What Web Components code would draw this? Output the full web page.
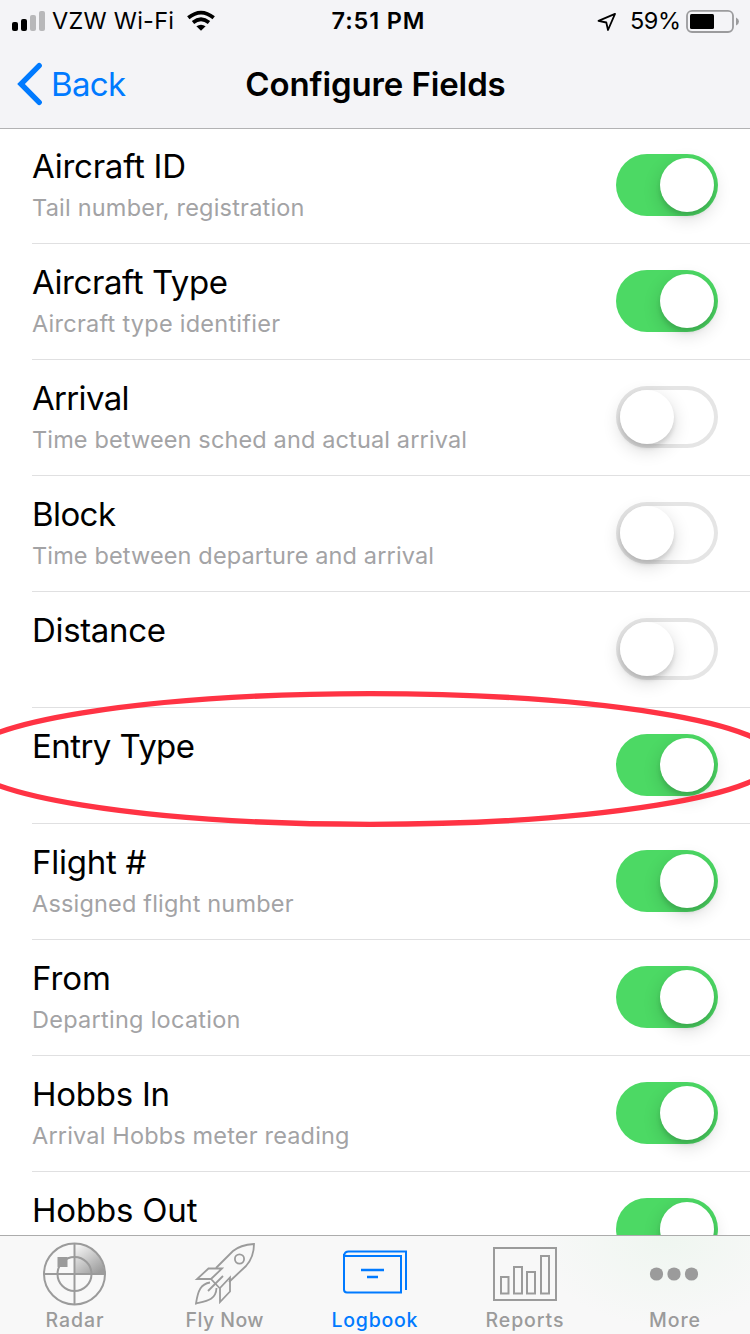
<!DOCTYPE html>
<html lang="en">
<head>
<meta charset="utf-8">
<title>Configure Fields</title>
<style>
    body {
        margin: 0;
        width: 750px;
        height: 1334px;
        overflow: hidden;
        background: #fff;
        color: #000;
        font-family: Inter, "Liberation Sans", sans-serif;
    }
</style>
</head>
<body>
<app-screen>
    <status-bar slot="top"></status-bar>
    <nav-bar slot="top" back="Back" heading="Configure Fields"></nav-bar>

    <field-row label="Aircraft ID" label-width="154" note="Tail number, registration" note-width="272.5" on></field-row>
    <field-row label="Aircraft Type" label-width="196" note="Aircraft type identifier" note-width="248" on></field-row>
    <field-row label="Arrival" label-width="97.5" note="Time between sched and actual arrival" note-width="435"></field-row>
    <field-row label="Block" label-width="84" note="Time between departure and arrival" note-width="402"></field-row>
    <field-row label="Distance" label-width="134"></field-row>
    <field-row label="Entry Type" label-width="163" on></field-row>
    <field-row label="Flight #" label-width="114.5" note="Assigned flight number" note-width="261.5" on></field-row>
    <field-row label="From" label-width="79" note="Departing location" note-width="208.5" on></field-row>
    <field-row label="Hobbs In" label-width="138" note="Arrival Hobbs meter reading" note-width="317.5" on></field-row>
    <field-row label="Hobbs Out" label-width="165.5" on></field-row>

    <highlight-ring slot="overlay"></highlight-ring>

    <tab-item slot="tabs" label="Radar" label-width="58">
        <svg width="64" height="64" viewBox="0.5 0 64 64" overflow="visible" fill="none" stroke="currentColor" stroke-width="2">
            <defs>
                <linearGradient id="sweep" x1="0" y1="0" x2="0.75" y2="1">
                    <stop offset="0.1" stop-color="#f2f2f2"/>
                    <stop offset="1" stop-color="#9d9d9d"/>
                </linearGradient>
            </defs>
            <path d="M32 32V2A30 30 0 0 1 62 32Z" fill="url(#sweep)" stroke="none"/>
            <circle cx="32" cy="32" r="30.5"/>
            <circle cx="32" cy="32" r="17"/>
            <path d="M32 1V63M1 32H63"/>
            <path d="M15 15H25V25H15Z" fill="currentColor" stroke="none"/>
        </svg>
    </tab-item>
    <tab-item slot="tabs" label="Fly Now" label-width="78">
        <svg width="64" height="64" viewBox="1 0 64 64" overflow="visible" fill="none" stroke="currentColor" stroke-width="1.8">
            <path d="M24 26L41 9Q48 3 62 2Q62 15 54 24L37 40"/>
            <circle cx="47.5" cy="17" r="4.6"/>
            <path d="M30 26.500H16.500L5 37H19ZM19 37L27.500 46M38 35.500V49.500L28 60V46Z"/>
            <path d="M31 34L16 49"/>
            <path d="M18 40.500C9 42 6 48 4 61.500C15 59 24 58 24.500 46"/>
        </svg>
    </tab-item>
    <tab-item slot="tabs" label="Logbook" label-width="86" active>
        <svg width="64" height="64" viewBox="0 0 64 64" fill="none" stroke="currentColor" stroke-width="2">
            <path d="M1 12V47.500Q1 50.500 4 50.500H58V14H4Q1.500 14 1 13Q2 9.500 5.500 9.500H63V48"/>
            <path d="M18 28H41M24 35H35" stroke-width="2.3"/>
        </svg>
    </tab-item>
    <tab-item slot="tabs" label="Reports" label-width="78">
        <svg width="64" height="64" viewBox="0 0 64 64" fill="none" stroke="currentColor" stroke-width="2">
            <path d="M1 6H63V58H1Z"/>
            <path d="M8 35H15.500V51.500H8ZM21 25H29V51.500H21ZM34 30H42V51.500H34ZM48 14H56V51.500H48Z"/>
        </svg>
    </tab-item>
    <tab-item slot="tabs" label="More" label-width="51">
        <svg width="64" height="64" viewBox="1 0 64 64" overflow="visible" fill="currentColor">
            <circle cx="14.500" cy="32" r="6.600"/>
            <circle cx="32" cy="32" r="6.600"/>
            <circle cx="49.500" cy="32" r="6.600"/>
        </svg>
    </tab-item>
</app-screen>

<script>
// One line of text, tracked so that it fills the given width
class TrackedText extends HTMLElement {
    connectedCallback() {
        this.attachShadow({ mode: "open" }).innerHTML = `
            <style>
                :host { display: block; white-space: nowrap; }
                span { display: inline-block; }
            </style>
            <span></span>
        `;
        const span = this.shadowRoot.querySelector("span");
        const text = this.getAttribute("text");
        span.textContent = text;
        const natural = span.getBoundingClientRect().width;
        const spacing = (Number(this.getAttribute("width")) - natural) / (text.length - 1);
        span.style.letterSpacing = spacing.toFixed(3) + "px";
        span.style.marginRight = (-spacing).toFixed(3) + "px";
    }
}

class AppScreen extends HTMLElement {
    constructor() {
        super();
        this.attachShadow({ mode: "open" }).innerHTML = `
            <style>
                :host {
                    position: relative;
                    display: flex;
                    flex-direction: column;
                    width: 750px;
                    height: 1334px;
                    overflow: hidden;
                }
                header {
                    flex: none;
                    height: 128px;
                    background: #f4f4f7;
                    border-bottom: 1px solid #b2b2b4;
                }
                main {
                    flex: 1;
                    min-height: 0;
                    margin-top: -1px;
                    overflow: hidden;
                }
                footer {
                    flex: none;
                    box-sizing: border-box;
                    height: 99px;
                    display: grid;
                    grid-template-columns: repeat(5, 1fr);
                    border-top: 1px solid #acacac;
                    background: radial-gradient(ellipse 130px 90px at 665px 0, #eff6f0, #f8f8f8);
                }
            </style>
            <header><slot name="top"></slot></header>
            <main><slot></slot></main>
            <footer><slot name="tabs"></slot></footer>
            <slot name="overlay"></slot>
        `;
    }
}

class StatusBar extends HTMLElement {
    constructor() {
        super();
        this.attachShadow({ mode: "open" }).innerHTML = `
            <style>
                :host {
                    display: grid;
                    grid-template-columns: 1fr auto 1fr;
                    align-items: center;
                    box-sizing: border-box;
                    height: 40px;
                    padding: 0 10px 0 12px;
                    font-size: 23.5px;
                    line-height: 42px;
                }
                div { display: flex; align-items: center; height: 40px; }
                .right { justify-content: flex-end; }
                .time { padding-left: 4px; font-weight: 600; }
                .carrier { margin: 0 13px 0 7px; }
                .percent { margin: 0 5px 0 12px; }
                svg { display: block; flex: none; }
            </style>
            <div>
                <svg width="33" height="40">
                    <rect x="0" y="21" width="6" height="9" rx="2"/>
                    <rect x="9" y="18" width="6" height="12" rx="2"/>
                    <rect x="18" y="14" width="6" height="16" rx="2" fill="#b8b8ba"/>
                    <rect x="27" y="10" width="6" height="20" rx="2" fill="#b8b8ba"/>
                </svg>
                <tracked-text class="carrier" text="VZW Wi-Fi" width="122"></tracked-text>
                <svg width="28" height="40" fill="none" stroke="#000" stroke-width="3.700">
                    <path d="M1.300 16.800Q14 6.500 26.700 16.800"/>
                    <path d="M6 21.500Q14 15 22 21.500"/>
                    <path d="M14 29.800L9.400 25.300Q14 22 18.600 25.300Z" fill="#000" stroke="none"/>
                </svg>
            </div>
            <tracked-text class="time" text="7:51 PM" width="93"></tracked-text>
            <div class="right">
                <svg width="20" height="40" overflow="visible" fill="none" stroke="#000" stroke-width="1.800" stroke-linejoin="round">
                    <path d="M17 12.800L0.500 19.800L8.300 21.500L10 29Z"/>
                </svg>
                <tracked-text class="percent" text="59%" width="51"></tracked-text>
                <svg width="54" height="40">
                    <rect x="1" y="9.800" width="46" height="21.200" rx="5" fill="none" stroke="#9b9b9d" stroke-width="1.800"/>
                    <rect x="4" y="13" width="24" height="15" rx="1.500"/>
                    <path d="M50 16.500Q53 18 53 20.500Q53 23 50 24.500Z" fill="#9b9b9d"/>
                </svg>
            </div>
        `;
    }
}

class NavBar extends HTMLElement {
    connectedCallback() {
        this.attachShadow({ mode: "open" }).innerHTML = `
            <style>
                :host {
                    display: grid;
                    grid-template-columns: 1fr auto 1fr;
                    align-items: center;
                    height: 88px;
                    font-size: 33px;
                    line-height: 88px;
                }
                .back {
                    display: flex;
                    align-items: center;
                    gap: 8px;
                    padding-left: 17px;
                    color: #007aff;
                }
                .heading { padding-left: 1px; font-weight: 600; }
                svg { display: block; }
            </style>
            <div class="back">
                <svg width="26" height="44" overflow="visible" fill="none" stroke="currentColor" stroke-width="5.400" stroke-linecap="round">
                    <path d="M22.200 3.700L4 22L22.200 40.300" stroke-linejoin="miter"/>
                </svg>
                <tracked-text text="${this.getAttribute("back")}" width="75"></tracked-text>
            </div>
            <tracked-text class="heading" text="${this.getAttribute("heading")}" width="260.5"></tracked-text>
        `;
    }
}

class ToggleSwitch extends HTMLElement {
    constructor() {
        super();
        this.attachShadow({ mode: "open" }).innerHTML = `
            <style>
                :host {
                    display: flex;
                    align-items: center;
                    box-sizing: border-box;
                    width: 102px;
                    height: 62px;
                    padding: 0 4px;
                    border-radius: 31px;
                    box-shadow: inset 0 0 0 4px #e5e5e5;
                }
                :host([on]) {
                    justify-content: flex-end;
                    background: #4cd964;
                    box-shadow: none;
                }
                i {
                    width: 54px;
                    height: 54px;
                    border-radius: 50%;
                    background: #fff;
                    box-shadow: 0 6px 18px rgba(0, 0, 0, 0.16), 0 4px 4px rgba(0, 0, 0, 0.11);
                }
            </style>
            <i></i>
        `;
    }
}

class FieldRow extends HTMLElement {
    connectedCallback() {
        const note = this.getAttribute("note");
        this.attachShadow({ mode: "open" }).innerHTML = `
            <style>
                :host {
                    display: flex;
                    justify-content: space-between;
                    box-sizing: border-box;
                    height: 116px;
                    margin-left: 32px;
                    padding-right: 32px;
                    border-bottom: 1px solid #e0e0e1;
                }
                .label { padding-top: 18px; font-size: 33px; line-height: 40px; }
                .note { padding-top: 7px; font-size: 23.5px; line-height: 30px; color: #a3a3a5; }
                toggle-switch { margin-top: 26px; }
            </style>
            <div>
                <tracked-text class="label" text="${this.getAttribute("label")}" width="${this.getAttribute("label-width")}"></tracked-text>
                ${note ? `<tracked-text class="note" text="${note}" width="${this.getAttribute("note-width")}"></tracked-text>` : ""}
            </div>
            <toggle-switch ${this.hasAttribute("on") ? "on" : ""}></toggle-switch>
        `;
    }
}

class TabItem extends HTMLElement {
    connectedCallback() {
        this.attachShadow({ mode: "open" }).innerHTML = `
            <style>
                :host {
                    display: flex;
                    flex-direction: column;
                    align-items: center;
                    padding-top: 6px;
                    color: #9b9b9b;
                    font-size: 19.5px;
                    font-weight: 500;
                    line-height: 24px;
                }
                :host([active]) { color: #007aff; }
                ::slotted(svg) { display: block; }
                tracked-text { margin: 2px 1px 0 0; }
            </style>
            <slot></slot>
            <tracked-text text="${this.getAttribute("label")}" width="${this.getAttribute("label-width")}"></tracked-text>
        `;
    }
}

// Marker ring around the Entry Type row
class HighlightRing extends HTMLElement {
    constructor() {
        super();
        this.attachShadow({ mode: "open" }).innerHTML = `
            <style>
                :host { position: absolute; left: 0; top: 680px; pointer-events: none; }
                svg { display: block; }
            </style>
            <svg width="750" height="160">
                <ellipse cx="369.800" cy="79" rx="406.200" ry="65.300" fill="none" stroke="#ff3344" stroke-width="5.300"/>
            </svg>
        `;
    }
}

customElements.define("tracked-text", TrackedText);
customElements.define("toggle-switch", ToggleSwitch);
customElements.define("status-bar", StatusBar);
customElements.define("nav-bar", NavBar);
customElements.define("field-row", FieldRow);
customElements.define("tab-item", TabItem);
customElements.define("highlight-ring", HighlightRing);
customElements.define("app-screen", AppScreen);
</script>
</body>
</html>
